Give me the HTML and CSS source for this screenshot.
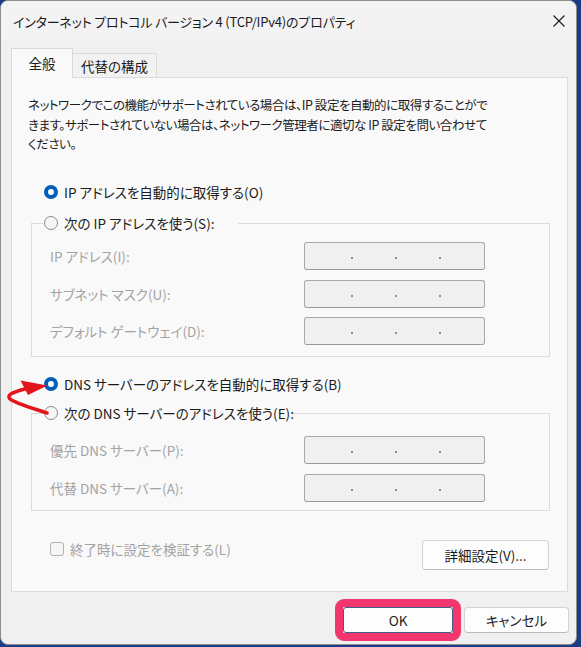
FILE: index.html
```html
<!DOCTYPE html>
<html lang="ja">
<head>
<meta charset="utf-8">
<title>IPv4 プロパティ</title>
<link rel="stylesheet" href="styles.css">
</head>
<body>
<div class="stage">
  <div class="window">
    <div class="titlebar">
      <span class="title">インターネット プロトコル バージョン 4 (TCP/IPv4)のプロパティ</span>
      <svg class="close" width="12" height="12" viewBox="0 0 12 12"><path d="M0.5 0.5 L11.5 11.5 M11.5 0.5 L0.5 11.5" stroke="#1b1b1b" stroke-width="1.1" fill="none"/></svg>
    </div>
    <div class="tabs">
      <div class="tab tab-active">全般</div>
      <div class="tab">代替の構成</div>
    </div>
    <div class="panel">
      <p class="intro">ネットワークでこの機能がサポートされている場合は、IP 設定を自動的に取得することがで<br>きます。サポートされていない場合は、ネットワーク管理者に適切な IP 設定を問い合わせて<br>ください。</p>

      <div class="radio-row row-auto-ip"><span class="radio on"></span><span>IP アドレスを自動的に取得する(O)</span></div>

      <fieldset class="group group-ip">
        <legend class="legend legend-ip"><span class="radio"></span><span>次の IP アドレスを使う(S):</span></legend>
        <div class="fields fields-ip">
          <span class="flabel">IP アドレス(I):</span>
          <span class="ipbox"><i></i><i></i><i></i></span>
          <span class="flabel">サブネット マスク(U):</span>
          <span class="ipbox"><i></i><i></i><i></i></span>
          <span class="flabel">デフォルト ゲートウェイ(D):</span>
          <span class="ipbox"><i></i><i></i><i></i></span>
        </div>
      </fieldset>

      <div class="radio-row row-auto-dns"><span class="radio on"></span><span>DNS サーバーのアドレスを自動的に取得する(B)</span></div>

      <fieldset class="group group-dns">
        <legend class="legend legend-dns"><span class="radio"></span><span>次の DNS サーバーのアドレスを使う(E):</span></legend>
        <div class="fields fields-dns">
          <span class="flabel">優先 DNS サーバー(P):</span>
          <span class="ipbox"><i></i><i></i><i></i></span>
          <span class="flabel">代替 DNS サーバー(A):</span>
          <span class="ipbox"><i></i><i></i><i></i></span>
        </div>
      </fieldset>

      <div class="bottom-row">
        <div class="check-row"><span class="checkbox"></span><span>終了時に設定を検証する(L)</span></div>
        <button class="btn btn-adv">詳細設定(V)...</button>
      </div>
    </div>
    <div class="actions">
      <div class="highlight"><button class="btn btn-ok">OK</button></div>
      <button class="btn btn-cancel">キャンセル</button>
    </div>
  </div>
  <svg class="arrow" width="60" height="50" viewBox="0 370 60 50">
    <path d="M47 413 C32 408 14 403 9.5 398.5 C7 395 12 392 27 388.5" stroke="#e3151b" stroke-width="3.6" fill="none" stroke-linecap="round"/>
    <polygon points="47.5,385.5 20.5,380.5 28,395" fill="#e3151b"/>
  </svg>
</div>
</body>
</html>
```
FILE: styles.css
```css
* { box-sizing: border-box; }
html, body {
  margin: 0;
  padding: 0;
}
body {
  width: 581px;
  height: 647px;
  background: #1d3c86;
  font-family: "Noto Sans CJK JP", "Noto Sans", sans-serif;
  font-size: 13.5px;
  font-feature-settings: "palt";
  color: #1b1b1b;
  overflow: hidden;
}
.stage {
  position: relative;
  width: 581px;
  height: 647px;
}
.window {
  width: 577px;
  height: 645px;
  background: #f0f0f0;
  border: 1px solid #8f8f8f;
  border-radius: 8px;
  overflow: hidden;
  display: flex;
  flex-direction: column;
}
.titlebar {
  height: 39px;
  flex: none;
  background: #f3f3f3;
  display: flex;
  align-items: center;
  justify-content: space-between;
  padding: 3px 11px 0 12px;
}
.title {
  font-size: 13px;
  letter-spacing: -0.2px;
  line-height: 18px;
  white-space: nowrap;
}
.close {
  display: block;
  margin-top: -3px;
}
.tabs {
  height: 37px;
  flex: none;
  display: flex;
  align-items: flex-end;
  padding-left: 10px;
}
.tab {
  height: 24px;
  width: 84px;
  border: 1px solid #d9d9d9;
  border-bottom: none;
  border-left: none;
  background: #f2f2f2;
  display: flex;
  align-items: center;
  justify-content: center;
  line-height: 16px;
  color: #1b1b1b;
}
.tab-active {
  height: 30px;
  width: 62px;
  border-left: 1px solid #d9d9d9;
  background: #f9f9f9;
  position: relative;
  margin-bottom: -1px;
  z-index: 1;
  padding-bottom: 1px;
}
.panel {
  flex: none;
  margin-left: 10px;
  width: 557px;
  height: 515px;
  background: #f9f9f9;
  border: 1px solid #dcdcdc;
  display: flex;
  flex-direction: column;
}
.intro {
  margin: 17px 0 0 16px;
  font-size: 12.5px;
  letter-spacing: -0.45px;
  line-height: 19.5px;
  white-space: nowrap;
}
.radio-row {
  display: flex;
  align-items: center;
  gap: 6px;
  height: 20px;
  line-height: 20px;
  padding-left: 32px;
  white-space: nowrap;
}
.row-auto-ip { margin-top: 28.5px; }
.row-auto-dns { margin-top: 17px; }
.radio {
  display: inline-block;
  flex: none;
  width: 14px;
  height: 14px;
  border-radius: 50%;
  border: 1px solid #8b8b8b;
  background: #f6f6f6;
}
.radio.on {
  border: 4px solid #005fb8;
  background: #ffffff;
}
.group {
  margin: 0 17px 0 19px;
  padding: 0 0 0 11px;
  border: 1px solid #dcdcdc;
  min-width: 0;
}
.group-ip { margin-top: 11px; padding-bottom: 11px; }
.group-dns { margin-top: 9px; padding-bottom: 8px; }
.legend {
  padding: 0 0 0 1px;
  height: 20px;
  line-height: 20px;
  display: flex;
  align-items: center;
  gap: 6px;
  white-space: nowrap;
}
.legend-ip { width: 195px; }
.legend-dns { width: 249px; }
.fields {
  display: grid;
  grid-template-columns: 254px 181px;
  align-items: center;
  padding-left: 7px;
}
.fields-ip { padding-top: 9px; row-gap: 9.5px; }
.fields-dns { padding-top: 13px; row-gap: 10px; }
.flabel {
  color: #a3a3a3;
  white-space: nowrap;
  line-height: 18px;
}
.ipbox {
  height: 28px;
  background: #f0f0f0;
  border: 1px solid #a8a8a8;
  border-bottom-color: #9a9a9a;
  border-radius: 3px;
  display: flex;
  align-items: center;
  padding: 4px 0 0 46px;
  gap: 42px;
}
.ipbox i {
  display: block;
  width: 2px;
  height: 2px;
  background: #8a8f9a;
}
.bottom-row {
  margin-top: 29px;
  display: flex;
  justify-content: space-between;
  align-items: flex-start;
  padding: 0 18px 0 38px;
}
.check-row {
  display: flex;
  align-items: center;
  gap: 6px;
  height: 18px;
  line-height: 18px;
  color: #a3a3a3;
  white-space: nowrap;
}
.checkbox {
  width: 14px;
  height: 14px;
  border: 1px solid #b3b3b3;
  border-radius: 3px;
  background: #f6f6f6;
}
.btn {
  font-family: inherit;
  font-size: 13.5px;
  font-feature-settings: "palt";
  color: #1b1b1b;
  background: #fdfdfd;
  border: 1px solid #d3d3d3;
  border-bottom-color: #bcbcbc;
  border-radius: 4px;
  padding: 0;
  line-height: 16px;
}
.btn-adv {
  width: 127px;
  height: 30px;
}
.actions {
  flex: none;
  margin-top: 7px;
  display: flex;
  justify-content: flex-end;
  align-items: center;
  gap: 3px;
  padding-right: 7px;
}
.highlight {
  border: 8px solid #f2376f;
  border-radius: 9px;
  display: flex;
}
.btn-ok {
  width: 110px;
  height: 26px;
  border: 1px solid #3e5f86;
  border-radius: 3px;
}
.btn-cancel {
  width: 105px;
  height: 26px;
}
.arrow {
  position: absolute;
  left: 0;
  top: 370px;
}
```
